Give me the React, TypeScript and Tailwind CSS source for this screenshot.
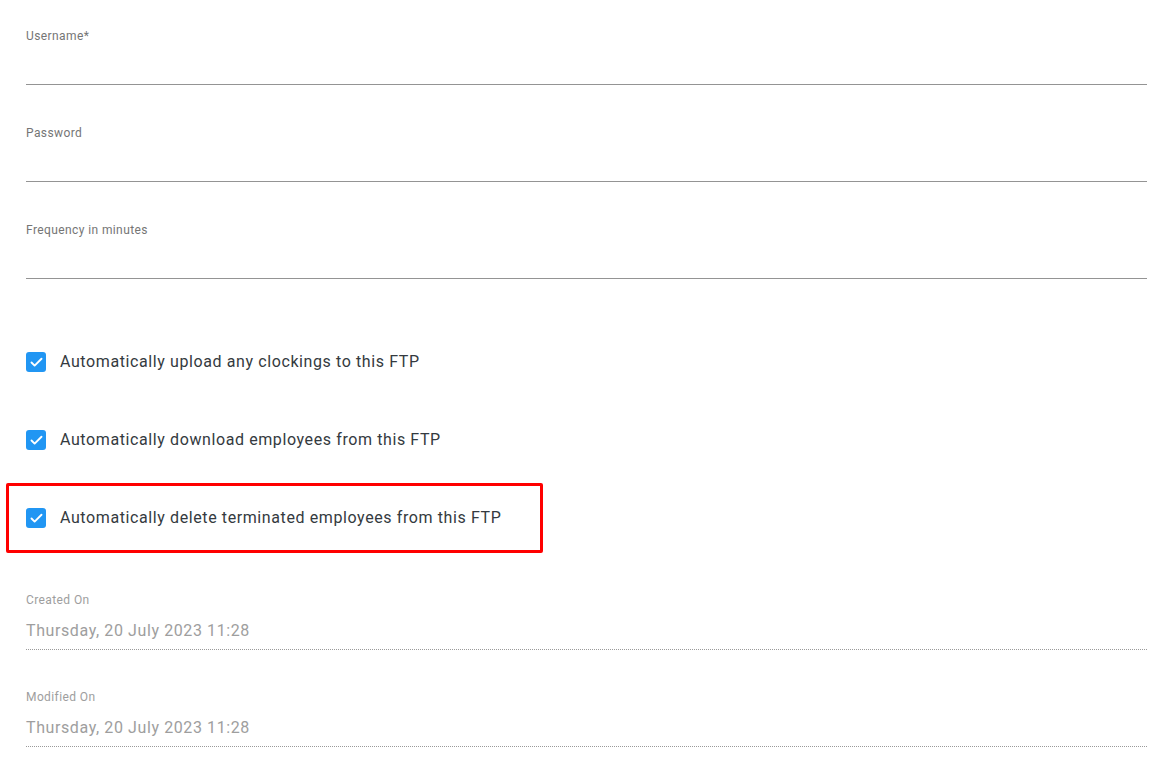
import { Check } from "lucide-react";

const fields = ["Username*", "Password", "Frequency in minutes"];

const options = [
  { label: "Automatically upload any clockings to this FTP", flagged: false },
  { label: "Automatically download employees from this FTP", flagged: false },
  { label: "Automatically delete terminated employees from this FTP", flagged: true },
];

const stamps = [
  { label: "Created On", value: "Thursday, 20 July 2023 11:28" },
  { label: "Modified On", value: "Thursday, 20 July 2023 11:28" },
];

export default function App() {
  return (
    <div className="min-h-[775px] bg-white pl-[26px] pr-[21px] font-['Roboto',sans-serif]">
      {/* Text inputs */}
      {fields.map((f) => (
        <div key={f} className="pt-[29px] mb-[12px] border-b border-[#949494]">
          <div className="text-[12px] leading-[14px] tracking-[0.4px] text-[#757575]">{f}</div>
          <input className="block w-full h-[41px] outline-none bg-transparent" />
        </div>
      ))}

      {/* Sync options */}
      <div className="mt-[44px]">
        {options.map((o) => (
          <div key={o.label} className="relative flex items-center h-[78px]">
            <span className="flex items-center justify-center w-[20px] h-[20px] rounded-[3px] bg-[#2196f3] text-white">
              <Check size={15} strokeWidth={3} />
            </span>
            <span className="ml-[14px] text-[16px] tracking-[0.6px] text-[#343a40]">{o.label}</span>
            {o.flagged && (
              <div className="absolute left-[-20px] top-[4px] w-[537px] h-[70px] border-[3px] border-[#ff0000] rounded-[2px]" />
            )}
          </div>
        ))}
      </div>

      {/* Read-only timestamps */}
      <div className="mt-[19px]">
        {stamps.map((s) => (
          <div key={s.label} className="pt-[17px] pb-[6px] mb-[23px] border-b border-dotted border-[#9a9a9a]">
            <div className="text-[12px] leading-[14px] tracking-[0.4px] text-[#9e9e9e]">{s.label}</div>
            <div className="mt-[12px] text-[16px] leading-[24px] tracking-[0.6px] text-[#9e9e9e]">{s.value}</div>
          </div>
        ))}
      </div>
    </div>
  );
}
